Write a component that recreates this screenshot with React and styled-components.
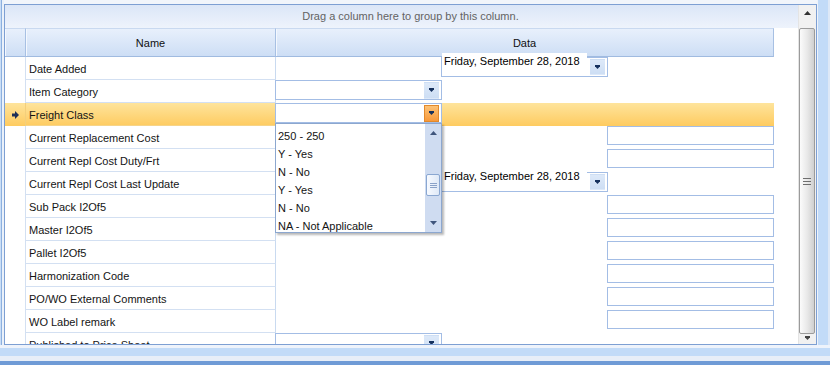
import React from 'react';
import styled, { createGlobalStyle } from 'styled-components';

const GlobalStyle = createGlobalStyle`
    html, body {
        margin: 0;
        padding: 0;
        background: #ffffff;
    }

    body {
        font-family: "Liberation Sans", Arial, sans-serif;
        font-size: 11px;
        color: #141414;
    }

    svg {
        display: block;
    }
`;

const Window = styled.div`
    width: 830px;
    height: 365px;
    display: flex;
    flex-direction: column;
    overflow: hidden;
    background: #f1f5fb;
`;

const Main = styled.div`
    display: flex;
    height: 345px;
`;

const LeftEdge = styled.div`
    flex: none;
    width: 4px;
    background: linear-gradient(to right, #c9ddf6 0 1px, #8cb0df 1px 2px, #eaf1fa 2px);
`;

const RightEdge = styled.div`
    flex: none;
    width: 13px;
    background: linear-gradient(to right, #eef3fa 0 1px, #c2dbf8 1px 11px, #dde8f7 11px);
`;

const BottomEdge = styled.div`
    height: 20px;
    background: linear-gradient(
        to bottom,
        #eef3fb 0 3px,
        #c2dbf8 3px 11px,
        #e7eef8 11px 16px,
        #6f9bd6 16px
    );
`;

const GridBox = styled.div`
    flex: none;
    box-sizing: border-box;
    width: 813px;
    height: 341px;
    margin-top: 4px;
    border: 1px solid #7d9fd3;
    display: flex;
    background: #ffffff;
`;

const Table = styled.div`
    flex: 1;
    display: flex;
    flex-direction: column;
    overflow: hidden;
    background: #ffffff;
`;

const GroupPanel = styled.div`
    flex: none;
    height: 23px;
    line-height: 23px;
    padding-left: 18px;
    text-align: center;
    color: #636363;
    background: linear-gradient(to bottom, #dbe6f7, #eef3fc);
`;

const Header = styled.div`
    flex: none;
    display: flex;
    height: 29px;
`;

const HeadCell = styled.div`
    box-sizing: border-box;
    width: ${p => p.w}px;
    height: 29px;
    line-height: 28px;
    text-align: center;
    color: #101010;
    border-top: 1px solid #c9d9f0;
    border-right: 1px solid #a7c0e3;
    border-bottom: 1px solid #a0bbe0;
    background: linear-gradient(to bottom, #e8f0fc, #cddef5);
    box-shadow: inset 1px 0 0 #f4f8fe;
`;

const Row = styled.div`
    flex: none;
    display: flex;
    width: 769px;
    height: 23px;
    background: ${p => (p.selected ? 'linear-gradient(to bottom, #fee49c, #fecb60)' : 'transparent')};
`;

const IndicatorCell = styled.div`
    box-sizing: border-box;
    width: 21px;
    height: 23px;
    display: flex;
    align-items: center;
    justify-content: center;
    border-right: 1px solid ${p => (p.selected ? '#f3cf7c' : '#d3e0f2')};
`;

const NameCell = styled.div`
    box-sizing: border-box;
    width: 250px;
    height: 23px;
    line-height: 22px;
    padding: 1px 0 0 3px;
    white-space: nowrap;
    border-right: 1px solid #c9daf0;
    border-bottom: 1px solid ${p => (p.selected ? '#f6d489' : '#d3e0f2')};
`;

const DataCell = styled.div`
    width: 499px;
    margin-left: -1px;
    display: grid;
    grid-template-columns: 166px 166px 167px;
    align-items: start;
`;

const Slot = styled.div`
    grid-column: ${p => p.col};
    width: 167px;
    position: relative;
`;

const TextBox = styled.div`
    box-sizing: border-box;
    height: 19px;
    border: 1px solid #a3bde5;
    background: #ffffff;
`;

const Combo = styled.div`
    box-sizing: border-box;
    height: 20px;
    display: flex;
    justify-content: flex-end;
    align-items: center;
    padding-right: 2px;
    border: 1px solid #a3bde5;
    background: #ffffff;
`;

const DropButton = styled.div`
    box-sizing: border-box;
    width: 15px;
    height: ${p => p.h || 16}px;
    display: flex;
    align-items: center;
    justify-content: center;
    border: 1px solid ${p => (p.hot ? '#e2892c' : 'transparent')};
    background: ${p =>
        p.hot
            ? 'linear-gradient(to bottom, #fcc277, #f8993a)'
            : 'linear-gradient(to bottom, #dde9f9, #cddef4)'};
`;

const DateBox = styled.div`
    box-sizing: border-box;
    height: 20px;
    display: flex;
    align-items: flex-start;
    border: 1px solid #a3bde5;
    background: #ffffff;
`;

const DateText = styled.div`
    flex: 1;
    align-self: stretch;
    margin-top: -${p => p.lift + 1}px;
    padding: ${p => p.lift - 1}px 0 0 2px;
    line-height: 11px;
    color: #000000;
    white-space: nowrap;
    background: #ffffff;
`;

const DateButtonWrap = styled.div`
    padding: 1px 2px 0 3px;
`;

const Popup = styled.div`
    position: absolute;
    z-index: 10;
    top: 100%;
    left: 0;
    box-sizing: border-box;
    width: 167px;
    height: 110px;
    display: flex;
    border: 1px solid #8ca7cf;
    background: #ffffff;
    box-shadow: 2px 2px 2px rgba(0, 0, 0, 0.28);
    overflow: hidden;
`;

const List = styled.div`
    flex: 1;
    padding-top: 3px;
`;

const Item = styled.div`
    height: 18px;
    line-height: 18px;
    padding-left: 2px;
    color: #141414;
    white-space: nowrap;
`;

const PopScroll = styled.div`
    flex: none;
    width: 16px;
    display: flex;
    flex-direction: column;
    background: #cfdcf1;
`;

const PopArrow = styled.div`
    height: 18px;
    display: flex;
    align-items: center;
    justify-content: center;
`;

const PopTrack = styled.div`
    flex: 1;
    padding-top: 32px;
`;

const PopThumb = styled.div`
    box-sizing: border-box;
    height: 22px;
    margin: 0 1px;
    display: flex;
    flex-direction: column;
    justify-content: center;
    align-items: center;
    gap: 1px;
    border: 1px solid #8aa7d1;
    border-radius: 2px;
    background: linear-gradient(to right, #f7faff, #dfe9f7);
`;

const Grip = styled.div`
    width: ${p => p.w || 7}px;
    height: 1px;
    background: ${p => p.c || '#8aa2c8'};
`;

const Scrollbar = styled.div`
    flex: none;
    width: 18px;
    display: flex;
    flex-direction: column;
    background: #f1f1f1;
    border-left: 1px solid #e4e4e4;
    box-sizing: border-box;
`;

const ScrollButton = styled.div`
    box-sizing: border-box;
    height: ${p => p.h}px;
    display: flex;
    justify-content: center;
    align-items: flex-start;
    padding-top: ${p => p.pad}px;
`;

const ScrollThumb = styled.div`
    flex: 1;
    margin: 0 1px 0 0;
    display: flex;
    flex-direction: column;
    justify-content: center;
    align-items: center;
    gap: 2px;
    border: 1px solid #9b9b9b;
    border-radius: 2px;
    background: linear-gradient(to right, #fbfbfb, #e9e9e9 50%, #d0d0d0);
`;

const DownArrow = ({ color = '#15315e' }) => (
    <svg width="5" height="4" viewBox="0 0 5 4">
        <path d="M0 0h5v1.3L2.5 4 0 1.3z" fill={color} />
    </svg>
);

const UpArrow = ({ color = '#333333' }) => (
    <svg width="7" height="4" viewBox="0 0 7 4">
        <path d="M3.5 0L7 4H0z" fill={color} />
    </svg>
);

const RowPointer = () => (
    <svg width="7" height="8" viewBox="0 0 7 8">
        <path d="M0 2.5h3V0l4 4-4 4V5.5H0z" fill="#1d2f58" />
    </svg>
);

const options = ['250 - 250', 'Y - Yes', 'N - No', 'Y - Yes', 'N - No', 'NA - Not Applicable'];

const rows = [
    { name: 'Date Added', editor: 'date', lift: 4 },
    { name: 'Item Category', editor: 'combo' },
    { name: 'Freight Class', editor: 'combo', selected: true },
    { name: 'Current Replacement Cost', editor: 'text' },
    { name: 'Current Repl Cost Duty/Frt', editor: 'text' },
    { name: 'Current Repl Cost Last Update', editor: 'date', lift: 2 },
    { name: 'Sub Pack I2Of5', editor: 'text' },
    { name: 'Master I2Of5', editor: 'text' },
    { name: 'Pallet I2Of5', editor: 'text' },
    { name: 'Harmonization Code', editor: 'text' },
    { name: 'PO/WO External Comments', editor: 'text' },
    { name: 'WO Label remark', editor: 'text' },
    { name: 'Published to Price Sheet', editor: 'combo' },
];

const DropList = () => (
    <Popup>
        <List>
            {options.map((o, i) => (
                <Item key={i}>{o}</Item>
            ))}
        </List>
        <PopScroll>
            <PopArrow>
                <UpArrow color="#3f557c" />
            </PopArrow>
            <PopTrack>
                <PopThumb>
                    <Grip />
                    <Grip />
                    <Grip />
                </PopThumb>
            </PopTrack>
            <PopArrow>
                <svg width="7" height="4" viewBox="0 0 7 4">
                    <path d="M0 0h7L3.5 4z" fill="#3f557c" />
                </svg>
            </PopArrow>
        </PopScroll>
    </Popup>
);

const Editor = ({ row }) => {
    if (row.editor === 'text') {
        return (
            <Slot col={3}>
                <TextBox />
            </Slot>
        );
    }
    if (row.editor === 'date') {
        return (
            <Slot col={2}>
                <DateBox>
                    <DateText lift={row.lift}>Friday, September 28, 2018</DateText>
                    <DateButtonWrap>
                        <DropButton h={16}>
                            <DownArrow />
                        </DropButton>
                    </DateButtonWrap>
                </DateBox>
            </Slot>
        );
    }
    return (
        <Slot col={1}>
            <Combo>
                <DropButton hot={row.selected} h={17}>
                    <DownArrow />
                </DropButton>
            </Combo>
            {row.selected && <DropList />}
        </Slot>
    );
};

const App = () => (
    <>
        <GlobalStyle />
        <Window>
            <Main>
                <LeftEdge />
                <GridBox>
                    <Table>
                        <GroupPanel>Drag a column here to group by this column.</GroupPanel>
                        <Header>
                            <HeadCell w={21} />
                            <HeadCell w={250}>Name</HeadCell>
                            <HeadCell w={498}>Data</HeadCell>
                        </Header>
                        {rows.map(row => (
                            <Row key={row.name} selected={row.selected}>
                                <IndicatorCell selected={row.selected}>
                                    {row.selected && <RowPointer />}
                                </IndicatorCell>
                                <NameCell selected={row.selected}>{row.name}</NameCell>
                                <DataCell>
                                    <Editor row={row} />
                                </DataCell>
                            </Row>
                        ))}
                    </Table>
                    <Scrollbar>
                        <ScrollButton h={23} pad={6}>
                            <UpArrow />
                        </ScrollButton>
                        <ScrollThumb>
                            <Grip w={8} c="#6e6e6e" />
                            <Grip w={8} c="#6e6e6e" />
                            <Grip w={8} c="#6e6e6e" />
                        </ScrollThumb>
                        <ScrollButton h={10} pad={2}>
                            <DownArrow color="#444444" />
                        </ScrollButton>
                    </Scrollbar>
                </GridBox>
                <RightEdge />
            </Main>
            <BottomEdge />
        </Window>
    </>
);

export default App;
